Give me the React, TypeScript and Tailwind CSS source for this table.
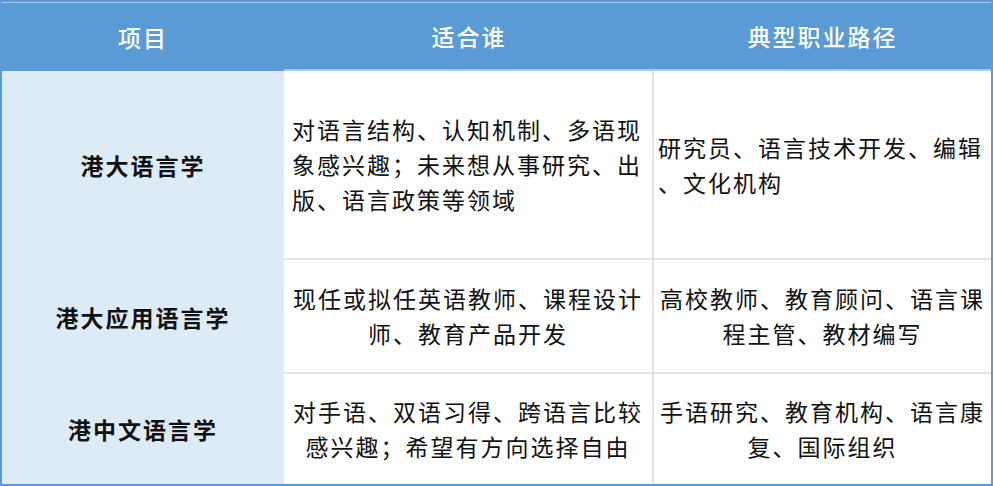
const rows = [
  {
    name: "港大语言学",
    fit: ["对语言结构、认知机制、多语现", "象感兴趣；未来想从事研究、出", "版、语言政策等领域"],
    fitAlign: "left",
    path: ["研究员、语言技术开发、编辑", "、文化机构"],
    pathAlign: "left",
  },
  {
    name: "港大应用语言学",
    fit: ["现任或拟任英语教师、课程设计", "师、教育产品开发"],
    fitAlign: "center",
    path: ["高校教师、教育顾问、语言课", "程主管、教材编写"],
    pathAlign: "center",
  },
  {
    name: "港中文语言学",
    fit: ["对手语、双语习得、跨语言比较", "感兴趣；希望有方向选择自由"],
    fitAlign: "center",
    path: ["手语研究、教育机构、语言康", "复、国际组织"],
    pathAlign: "center",
  },
];

const Lines = ({ lines }: { lines: string[] }) => (
  <>
    {lines.map((line, i) => (
      <div key={"line-" + i} className="whitespace-nowrap">
        {line}
      </div>
    ))}
  </>
);

export default function App() {
  return (
    <div
      className="w-[993px] h-[486px] border-2 border-[#5b9bd5] bg-white text-[23px] leading-[35px] tracking-[2px] text-[#111]"
      style={{ fontFamily: '"Noto Sans CJK SC", "Noto Sans", sans-serif' }}
    >
      <div className="grid h-full grid-cols-[282px_370px_1fr] grid-rows-[68px_189px_114px_1fr] border-t border-[#a9c9ec]">
        <div className="flex items-center justify-center bg-[#5b9bd5] text-white font-medium">项目</div>
        <div className="flex items-center justify-center bg-[#5b9bd5] text-white font-medium border-b-2 border-[#a9c9ec]">
          适合谁
        </div>
        <div className="flex items-center justify-center bg-[#5b9bd5] text-white font-medium border-b-2 border-[#a9c9ec]">
          典型职业路径
        </div>

        {rows.map((row, index) => {
          const last = index === rows.length - 1;
          return [
            <div
              key={"name-" + index}
              className="flex items-center justify-center bg-[#ddebf7] font-bold"
            >
              {row.name}
            </div>,
            <div
              key={"fit-" + index}
              className={
                "flex flex-col justify-center border-r-2 border-[#e3e3e3] " +
                (last ? "" : "border-b-2 ") +
                (row.fitAlign === "left" ? "items-start pl-2" : "items-center")
              }
            >
              <Lines lines={row.fit} />
            </div>,
            <div
              key={"path-" + index}
              className={
                "flex flex-col justify-center border-[#e3e3e3] " +
                (last ? "" : "border-b-2 ") +
                (row.pathAlign === "left" ? "items-start pl-1" : "items-center")
              }
            >
              <Lines lines={row.path} />
            </div>,
          ];
        })}
      </div>
    </div>
  );
}
